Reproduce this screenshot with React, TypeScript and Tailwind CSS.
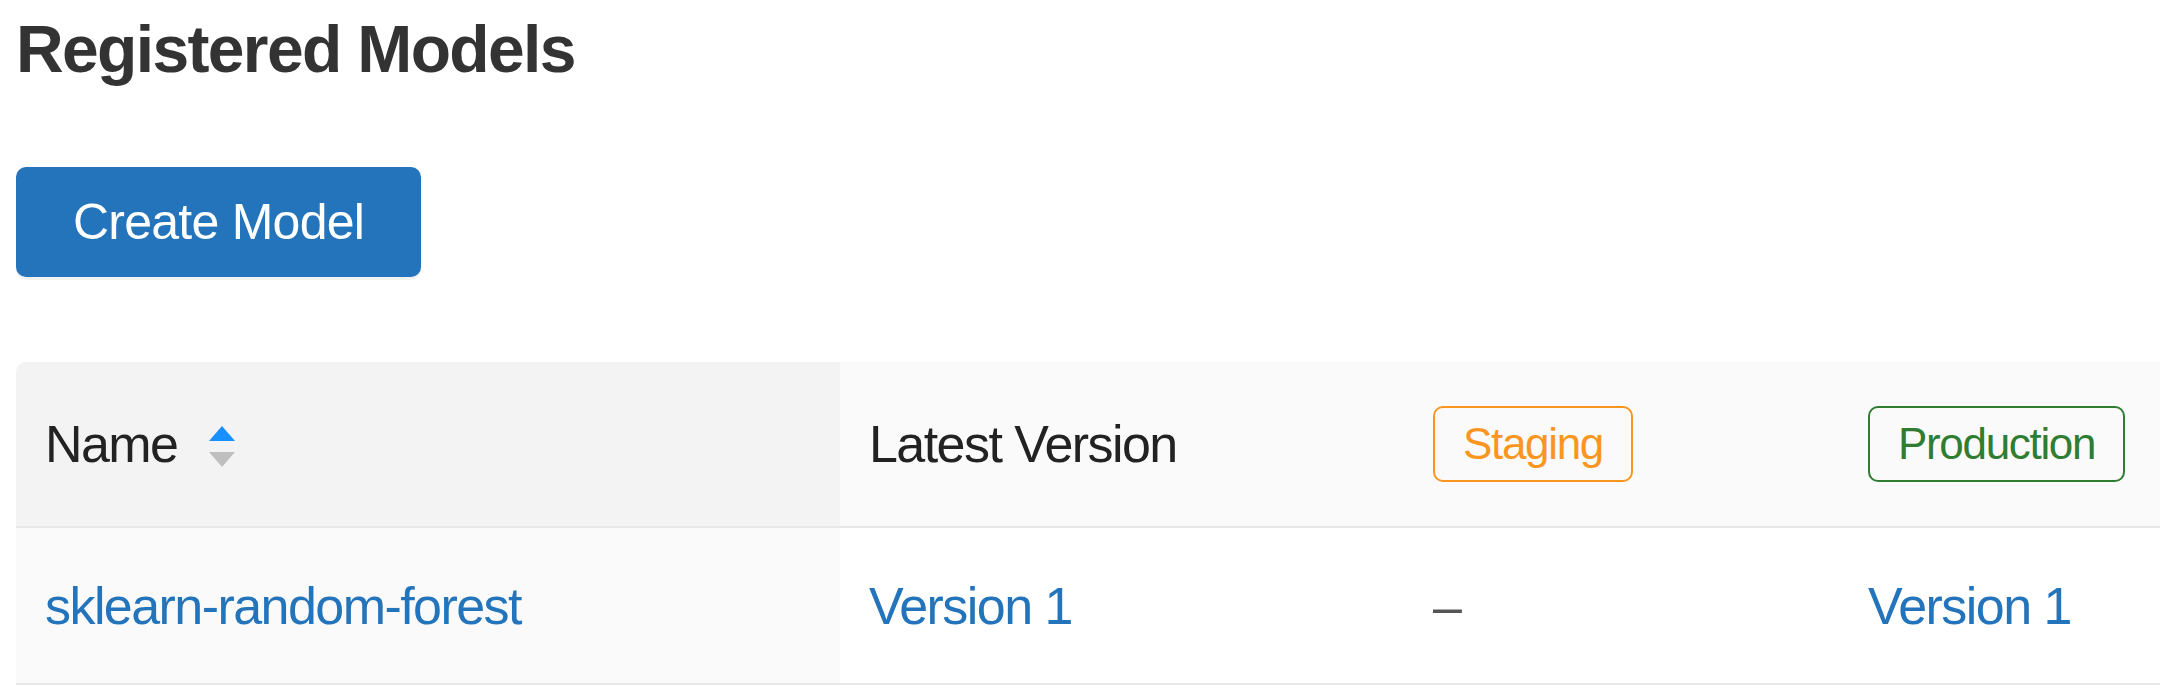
import React from 'react'

const font = "font-['Liberation_Sans',Arial,Helvetica,sans-serif]"

function SortIcon() {
  return (
    <svg width="26" height="41" viewBox="0 0 26 41" className="ml-[32px] mt-[4px]">
      <polygon points="0,15 13,0 26,15" fill="#1890ff" />
      <polygon points="0,26 26,26 13,41" fill="#bfbfbf" />
    </svg>
  )
}

function Badge({ label, tone }: { label: string; tone: 'staging' | 'production' }) {
  return (
    <span
      className={
        'inline-flex h-[76px] items-center rounded-[10px] border-2 px-[28px] text-[44px] leading-none tracking-[-0.03em] ' +
        (tone === 'staging'
          ? 'border-[#fa961f] text-[#fa961f]'
          : 'border-[#2e7d32] text-[#2e7d32]')
      }
    >
      {label}
    </span>
  )
}

export default function App() {
  return (
    <div className={`${font} min-h-[694px] w-full overflow-hidden bg-white pl-4`}>
      <h1 className="mt-[16px] text-[66px] font-bold leading-none tracking-[-0.025em] text-[#333]">
        Registered Models
      </h1>

      <button className="mt-[85px] flex h-[110px] items-center rounded-[10px] bg-[#2474bb] px-[57px] text-[50px] leading-none tracking-[-0.015em] text-white shadow-[0_3px_0_rgba(0,0,0,0.05)]">
        Create Model
      </button>

      <div className="mt-[85px] grid grid-cols-[824px_564px_435px_1fr] text-[52px] leading-none tracking-[-0.03em]">
        {/* header */}
        <div className="flex h-[166px] items-center rounded-tl-[10px] border-b-2 border-[#e8e8e8] bg-[#f3f3f3] pl-[29px] text-[#222]">
          <span>Name</span>
          <SortIcon />
        </div>
        <div className="flex h-[166px] items-center border-b-2 border-[#e8e8e8] bg-[#fafafa] pl-[29px] text-[#222]">
          Latest Version
        </div>
        <div className="flex h-[166px] items-center border-b-2 border-[#e8e8e8] bg-[#fafafa] pl-[29px]">
          <Badge label="Staging" tone="staging" />
        </div>
        <div className="flex h-[166px] items-center border-b-2 border-[#e8e8e8] bg-[#fafafa] pl-[29px]">
          <Badge label="Production" tone="production" />
        </div>

        {/* row */}
        <div className="flex h-[157px] items-center border-b-2 border-[#e8e8e8] bg-[#fafafa] pl-[29px]">
          <a className="text-[#2374bb]">sklearn-random-forest</a>
        </div>
        <div className="flex h-[157px] items-center border-b-2 border-[#e8e8e8] bg-white pl-[29px]">
          <a className="text-[#2374bb]">Version 1</a>
        </div>
        <div className="flex h-[157px] items-center border-b-2 border-[#e8e8e8] bg-white pl-[29px] text-[#555]">
          –
        </div>
        <div className="flex h-[157px] items-center border-b-2 border-[#e8e8e8] bg-white pl-[29px]">
          <a className="text-[#2374bb]">Version 1</a>
        </div>
      </div>
    </div>
  )
}
